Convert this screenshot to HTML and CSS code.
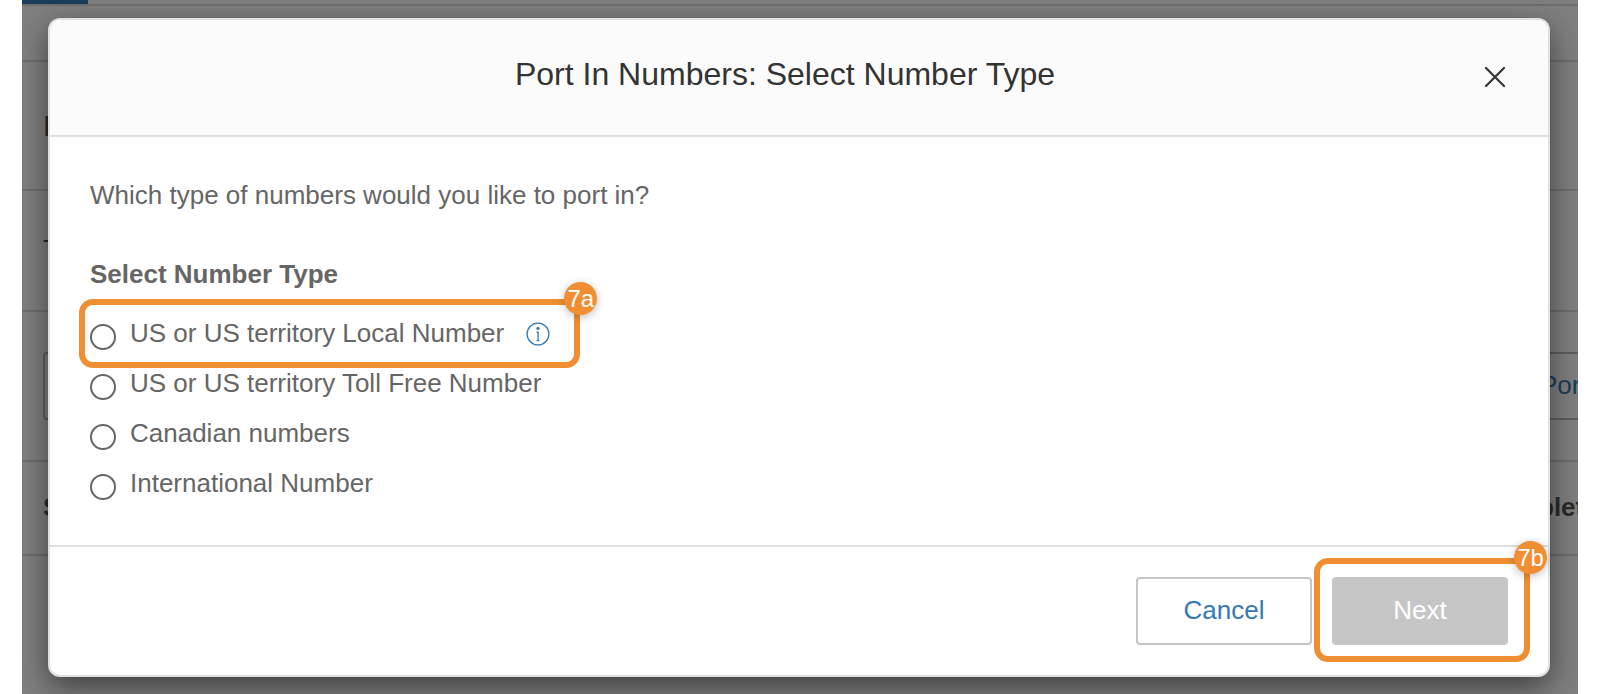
FILE: index.html
```html
<!DOCTYPE html>
<html lang="en">
  <head>
    <meta charset="UTF-8" />
    <meta name="viewport" content="width=device-width, initial-scale=1.0" />
    <title>Port In Numbers</title>
    <link rel="stylesheet" href="styles.css">
  </head>
  <body>
    <div class="stage">
      <div class="page" aria-hidden="true">
        <div class="row row-tabs"><span class="tab-active"></span></div>
        <div class="row row-sub"></div>
        <div class="row row-heading"><span>P</span></div>
        <div class="row row-text"><span>T</span></div>
        <div class="row row-tools">
          <span class="search-box"></span>
          <span class="port-button">Port</span>
        </div>
        <div class="row row-columns">
          <span>S</span>
          <span class="col-last">plet</span>
        </div>
      </div>

      <div class="backdrop">
        <form class="modal" role="dialog" aria-labelledby="modalTitle">
          <div class="modal-header">
            <h2 id="modalTitle">Port In Numbers: Select Number Type</h2>
            <button type="button" class="close" aria-label="Close">
              <svg width="28" height="28" viewBox="0 0 28 28">
                <path d="M6 4 L24 22 M24 4 L6 22" fill="none" stroke="#333" stroke-width="2.2" stroke-linecap="round" />
              </svg>
            </button>
          </div>

          <div class="modal-body">
            <p>Which type of numbers would you like to port in?</p>
            <fieldset>
              <legend>Select Number Type</legend>
              <div class="option">
                <input type="radio" name="numberType" id="usLocal" />
                <label for="usLocal">US or US territory Local Number</label>
                <svg class="info" width="24" height="24" viewBox="0 0 24 24">
                  <circle cx="12" cy="12" r="10.9" fill="none" stroke="#337ab7" stroke-width="1.3" />
                  <circle cx="12" cy="6.3" r="1.6" fill="#337ab7" />
                  <path d="M10.6 10.2 H12.1 V18.6 M10.6 18.6 H13.4" fill="none" stroke="#337ab7" stroke-width="1.3" />
                </svg>
                <div class="highlight highlight-option"><span class="badge">7a</span></div>
              </div>
              <div class="option">
                <input type="radio" name="numberType" id="usTollFree" />
                <label for="usTollFree">US or US territory Toll Free Number</label>
              </div>
              <div class="option">
                <input type="radio" name="numberType" id="canadian" />
                <label for="canadian">Canadian numbers</label>
              </div>
              <div class="option">
                <input type="radio" name="numberType" id="international" />
                <label for="international">International Number</label>
              </div>
            </fieldset>
          </div>

          <div class="modal-footer">
            <button type="button" class="btn btn-cancel">Cancel</button>
            <div class="next-wrap">
              <button type="submit" class="btn btn-next" disabled>Next</button>
              <div class="highlight highlight-next"><span class="badge">7b</span></div>
            </div>
          </div>
        </form>
      </div>
    </div>
  </body>
</html>
```
FILE: styles.css
```css
* {
  margin: 0;
  padding: 0;
  box-sizing: border-box;
}

body {
  font-family: "Liberation Sans", Arial, sans-serif;
  font-size: 26px;
  line-height: 38px;
  color: #666;
  background-color: #fff;
}

.stage {
  position: relative;
  min-height: 100vh;
  margin: 0 22px;
  overflow: hidden;
}

/* page under the dialog */
.page {
  position: absolute;
  inset: 0;
  color: #555;
  background-color: #fff;
}

.row {
  display: flex;
  align-items: center;
  justify-content: space-between;
  padding-left: 21px;
  border-bottom: 2px solid #ddd;
}

.row-tabs {
  height: 6px;
  padding: 0;
  align-items: flex-start;
}

.tab-active {
  width: 66px;
  height: 4px;
  background-color: #337ab7;
}

.row-sub {
  height: 56px;
}

.row-heading {
  height: 129px;
  font-size: 30px;
}

.row-text {
  height: 121px;
  padding-bottom: 4px;
}

.row-tools {
  height: 150px;
}

.search-box {
  width: 400px;
  height: 68px;
  border: 2px solid #bbb;
  border-radius: 4px;
}

.port-button {
  width: 68px;
  height: 68px;
  padding: 12px 0 0 28px;
  border: 2px solid #bbb;
  border-right: 0;
  color: #337ab7;
}

.row-columns {
  height: 94px;
  padding-bottom: 2px;
  font-weight: bold;
}

.col-last {
  width: 40px;
}

.backdrop {
  position: relative;
  min-height: 100vh;
  padding: 18px 28px 17px 26px;
  background-color: rgba(0, 0, 0, 0.5);
}

.modal {
  border: 2px solid #e0e0e0;
  border-radius: 12px;
  background-color: #fff;
  box-shadow: 0 10px 30px rgba(0, 0, 0, 0.5);
}

.modal-header {
  display: flex;
  align-items: center;
  height: 117px;
  padding: 0 40px;
  border-bottom: 2px solid #e0e0e0;
  border-radius: 10px 10px 0 0;
  background-color: #fbfbfb;
}

.modal-header h2 {
  flex: 1;
  padding-bottom: 8px;
  font-size: 32px;
  font-weight: 300;
  text-align: center;
  color: #333;
}

.close {
  width: 28px;
  height: 28px;
  border: 0;
  background: none;
  cursor: pointer;
}

.close svg {
  display: block;
}

.modal-body {
  padding: 39px 40px 36px;
}

.modal-body p {
  margin-bottom: 41px;
}

fieldset {
  border: 0;
}

legend {
  margin-bottom: 16px;
  font-weight: bold;
}

.option {
  position: relative;
  display: flex;
  align-items: center;
  width: fit-content;
  height: 50px;
}

.option label {
  padding-bottom: 2px;
}

.option input {
  appearance: none;
  width: 26px;
  height: 26px;
  margin: 5px 14px 0 0;
  border: 2px solid #666;
  border-radius: 50%;
}

.option input:checked {
  background: radial-gradient(#666 40%, transparent 45%);
}

.info {
  margin-left: 22px;
}

.modal-footer {
  display: flex;
  justify-content: flex-end;
  gap: 20px;
  padding: 30px 40px;
  border-top: 2px solid #e0e0e0;
}

.btn {
  display: block;
  width: 176px;
  height: 68px;
  padding-bottom: 2px;
  border: 2px solid #c6c6c6;
  border-radius: 4px;
  font-family: inherit;
  font-size: 26px;
  cursor: pointer;
}

.btn-cancel {
  color: #337ab7;
  background-color: #fff;
}

.btn-next {
  color: #fff;
  background-color: #c6c6c6;
}

.next-wrap {
  position: relative;
}

/* step markers */
.highlight {
  position: absolute;
  border: 6px solid #f08e33;
  border-radius: 14px;
  pointer-events: none;
}

.highlight-option {
  inset: -10px -30px -9px -11px;
}

.highlight-next {
  inset: -19px -22px -17px -18px;
}

.badge {
  position: absolute;
  top: -23px;
  right: -23px;
  width: 33px;
  height: 33px;
  border-radius: 50%;
  font-size: 24px;
  line-height: 34px;
  text-align: center;
  color: #fff;
  background-color: #f08e33;
  box-shadow: 0 2px 8px rgba(0, 0, 0, 0.25);
}
```
